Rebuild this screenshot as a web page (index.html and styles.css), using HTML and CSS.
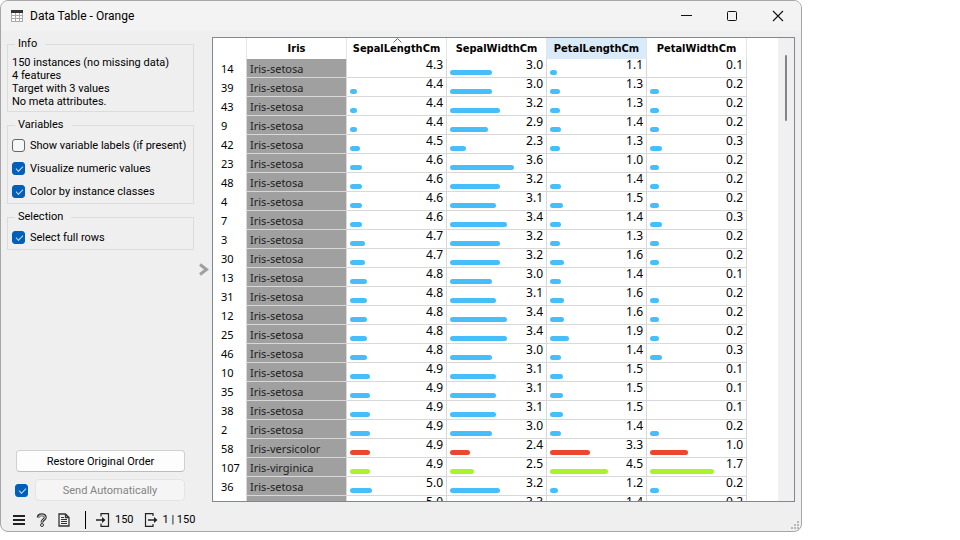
FILE: index.html
```html
<!DOCTYPE html>
<html lang="en">
<head>
<meta charset="utf-8">
<title>Data Table - Orange</title>
<link rel="stylesheet" href="styles.css">
</head>
<body>
<main class="window">
  <header class="titlebar">
    <svg class="app-icon" width="12" height="12" viewBox="0 0 12 12" shape-rendering="crispEdges"><rect width="12" height="12" fill="#fff"/><path d="M0 0h12v3H0z" fill="#333"/><path d="M.5 3v8.500h11V3M4.500 3v9M8.500 3v9M0 5.500h12M0 8.500h12" fill="none" stroke="#aaa"/></svg>
    <h1 class="title">Data Table - Orange</h1>
    <button class="win-btn" type="button" aria-label="Minimize"><svg width="12" height="12" viewBox="0 0 12 12"><path d="M1 5.500h11" stroke="#111"/></svg></button>
    <button class="win-btn" type="button" aria-label="Maximize"><svg width="12" height="12" viewBox="0 0 12 12"><rect x="1.500" y="1.500" width="9" height="9" rx="1" fill="none" stroke="#111"/></svg></button>
    <button class="win-btn" type="button" aria-label="Close"><svg width="12" height="12" viewBox="0 0 12 12"><path d="M1 1l10 10M11 1L1 11" stroke="#111" stroke-width="1.100"/></svg></button>
  </header>
  <div class="body">
    <aside class="side">
      <fieldset class="group">
        <legend>Info</legend>
        <p class="info">150 instances (no missing data)<br>4 features<br>Target with 3 values<br>No meta attributes.</p>
      </fieldset>
      <fieldset class="group">
        <legend>Variables</legend>
        <label class="option"><input class="check" type="checkbox">Show variable labels (if present)</label>
        <label class="option"><input class="check" type="checkbox" checked>Visualize numeric values</label>
        <label class="option"><input class="check" type="checkbox" checked>Color by instance classes</label>
      </fieldset>
      <fieldset class="group">
        <legend>Selection</legend>
        <label class="option"><input class="check" type="checkbox" checked>Select full rows</label>
      </fieldset>
      <div class="actions">
        <button class="push" type="button">Restore Original Order</button>
        <div class="send">
          <input class="check" type="checkbox" checked aria-label="Send automatically">
          <button class="push" type="button" disabled>Send Automatically</button>
        </div>
      </div>
    </aside>
    <button class="collapse" type="button" aria-label="Toggle side panel"><svg width="12" height="14" viewBox="0 0 12 14"><path d="M3 1.500l6.500 5L3 11.500" fill="none" stroke="#a0a0a0" stroke-width="3"/></svg></button>
    <section class="view">
      <div class="grid-clip">
        <table class="grid">
          <colgroup><col class="c-id"><col class="c-cell"><col class="c-cell"><col class="c-cell"><col class="c-cell"><col class="c-cell"></colgroup>
          <thead>
            <tr><td></td><th>Iris</th><th class="sorted">SepalLengthCm<svg class="sort" width="9" height="5" viewBox="0 0 9 5"><path d="M.5 4.500l4-4 4 4" fill="none" stroke="#666"/></svg></th><th>SepalWidthCm</th><th class="hover">PetalLengthCm</th><th>PetalWidthCm</th></tr>
          </thead>
          <tbody id="rows"></tbody>
        </table>
      </div>
      <div class="scroll"><div class="thumb"></div></div>
    </section>
  </div>
  <footer class="status">
    <button class="tool" type="button" aria-label="Menu"><svg width="14" height="14" viewBox="0 0 14 14"><path d="M1 3h12M1 7h12M1 11h12" stroke="#222" stroke-width="2" shape-rendering="crispEdges"/></svg></button>
    <button class="tool" type="button" aria-label="Help"><svg width="12" height="14" viewBox="0 0 12 14"><path d="M2.200 4.500C2.500 .8 9.300 .8 9.300 4.300C9.300 6.600 6 6.500 6 9.400" fill="none" stroke="#333" stroke-width="3"/><path d="M2.700 4C3 1.500 9 1.200 9.200 4.300C9.200 6.600 6 6.500 6 8.700" fill="none" stroke="#efefef"/><circle cx="6" cy="12" r="1.500" fill="#efefef" stroke="#333"/></svg></button>
    <button class="tool" type="button" aria-label="Report"><svg width="12" height="14" viewBox="0 0 12 14"><path d="M1 1h6.500L11 4.500V13H1zM7.500 1v3.500H11" fill="none" stroke="#333" stroke-width="1.300"/><path d="M3 4.500h3M3 6.500h6M3 8.500h6M3 10.500h6" stroke="#333"/></svg></button>
    <span class="rule"></span>
    <span class="flow"><svg width="14" height="14" viewBox="0 0 14 14"><path d="M5 3.500V.6h7.500v12.800H5V10.500" fill="none" stroke="#222" stroke-width="1.200"/><path d="M0 7h8" stroke="#222" stroke-width="1.300"/><path d="M6 4l3.500 3L6 10z" fill="#222"/></svg>150</span>
    <span class="flow"><svg width="14" height="14" viewBox="0 0 14 14"><path d="M9 3V.6H1.500v12.800H9V11" fill="none" stroke="#222" stroke-width="1.200"/><path d="M4 7h8" stroke="#222" stroke-width="1.300"/><path d="M10 4l3.500 3L10 10z" fill="#222"/></svg>1 | 150</span>
    <svg class="grip" width="8" height="8" viewBox="0 0 8 8" fill="#b8b8b8" shape-rendering="crispEdges"><path d="M6 0h2v2H6zM3 3h2v2H3zM6 3h2v2H6zM0 6h2v2H0zM3 6h2v2H3zM6 6h2v2H6z"/></svg>
  </footer>
</main>
<script src="table.js"></script>
</body>
</html>
```
FILE: styles.css
```css
* { box-sizing: border-box; }

body {
  margin: 0;
  padding: 0 158px 8px 0;
  height: 100vh;
  background: #fff;
  color: #000;
  font: 11px/13px Roboto, sans-serif;
  overflow: hidden;
}

button { font: inherit; color: inherit; border: 0; padding: 0; background: none; }
svg { display: block; flex: none; }

.window {
  height: 100%;
  display: flex;
  flex-direction: column;
  background: #efefef;
  border: 1px solid #a6a6a6;
  border-radius: 8px;
  overflow: hidden;
}

.titlebar {
  display: flex;
  align-items: center;
  height: 30px;
  flex: none;
  padding-left: 10px;
  background: #f3f3f3;
}
.title { flex: 1; margin: 0 0 0 7px; font: 12px/16px Roboto, sans-serif; }
.win-btn { width: 46px; height: 28px; display: grid; place-items: center; }

.body { flex: 1; min-height: 0; display: flex; padding: 6px 6px 0; }

.side { width: 187px; flex: none; display: flex; flex-direction: column; gap: 6px; }
.group { margin: 0; padding: 2px 4px 0; border: 1px solid #dcdcdc; min-width: 0; }
.group legend { margin-left: 3px; padding: 0 8px 0 3px; height: 14px; line-height: 14px; }
.info { margin: 3px 0; white-space: nowrap; }
.option { display: flex; align-items: center; gap: 5px; height: 23px; white-space: nowrap; }

.check {
  appearance: none;
  flex: none;
  width: 13px;
  height: 13px;
  margin: 0;
  border: 1px solid #666;
  border-radius: 3px;
  background: #f6f6f6;
  position: relative;
}
.check:checked { background: #005fb8; border-color: #005fb8; }
.check:checked::after {
  content: "";
  position: absolute;
  left: 3px;
  top: 3px;
  width: 6px;
  height: 3px;
  border: solid #c4dcf2;
  border-width: 0 0 1px 1px;
  transform: rotate(-45deg);
}

.actions { margin-top: auto; padding: 0 9px 1px; display: flex; flex-direction: column; gap: 7px; }
.push {
  height: 22px;
  border: 1px solid #d0d0d0;
  border-bottom-color: #bcbcbc;
  border-radius: 4px;
  background: #fdfdfd;
}
.push:disabled { flex: 1; border-color: #e4e4e4; background: #f5f5f5; color: #838383; }
.send { display: flex; align-items: center; gap: 7px; margin-left: -1px; }

.collapse { width: 18px; display: flex; align-items: center; justify-content: center; }

.view { flex: 1; min-width: 0; display: flex; border: 1px solid #828790; background: #fff; }
.grid-clip { flex: 1; min-width: 0; overflow: hidden; }
.grid { table-layout: fixed; width: 534px; border-collapse: separate; border-spacing: 0; font-family: "Noto Sans", sans-serif; }
.c-id { width: 34px; }
.c-cell { width: 100px; }
.grid th, .grid td { padding: 0; border-right: 1px solid #d8d8d8; white-space: nowrap; }
.grid thead th, .grid thead td { height: 21px; border-right-color: #e5e5e5; }
.grid th { font: bold 11px/21px "DejaVu Sans Condensed", sans-serif; text-align: center; }
.grid .hover { background: #d9ebf9; }
.sorted { position: relative; }
.sort { position: absolute; left: 46px; top: 0; }
.grid tbody td { height: 19px; border-bottom: 1px solid #d8d8d8; }
.grid tbody .id { padding: 0 0 0 8px; border-bottom: 0; }
.grid tbody .class { padding: 1px 0 0 3px; background: #a0a0a0; color: #222; line-height: 17px; }
.grid tbody .num { vertical-align: top; padding: 0 3px; }
.value { display: block; height: 11px; line-height: 12px; font-size: 12px; text-align: right; }
.bar { height: 5px; border-radius: 3px; background: #46befa; }
.versicolor .bar { background: #ed462f; }
.virginica .bar { background: #aaf22b; }

.scroll { width: 16px; flex: none; padding: 17px 7px 0; background: #f0f0f0; }
.thumb { width: 2px; height: 66px; border-radius: 1px; background: #858585; }

.status { height: 29px; flex: none; display: flex; align-items: center; padding: 6px 2px 0 11px; }
.tool { margin-right: 10px; }
.rule { width: 1px; height: 18px; margin: 0 10px 0 5px; background: #000; }
.flow { display: flex; align-items: center; gap: 5px; margin-right: 10px; }
.grip { margin-left: auto; align-self: flex-end; margin-bottom: 2px; }
```
FILE: table.js
```js
const ranges = [[4.3, 7.9], [2, 4.4], [1, 6.9], [0.1, 2.5]];
const data = `14 setosa 4.3 3.0 1.1 0.1
39 setosa 4.4 3.0 1.3 0.2
43 setosa 4.4 3.2 1.3 0.2
9 setosa 4.4 2.9 1.4 0.2
42 setosa 4.5 2.3 1.3 0.3
23 setosa 4.6 3.6 1.0 0.2
48 setosa 4.6 3.2 1.4 0.2
4 setosa 4.6 3.1 1.5 0.2
7 setosa 4.6 3.4 1.4 0.3
3 setosa 4.7 3.2 1.3 0.2
30 setosa 4.7 3.2 1.6 0.2
13 setosa 4.8 3.0 1.4 0.1
31 setosa 4.8 3.1 1.6 0.2
12 setosa 4.8 3.4 1.6 0.2
25 setosa 4.8 3.4 1.9 0.2
46 setosa 4.8 3.0 1.4 0.3
10 setosa 4.9 3.1 1.5 0.1
35 setosa 4.9 3.1 1.5 0.1
38 setosa 4.9 3.1 1.5 0.1
2 setosa 4.9 3.0 1.4 0.2
58 versicolor 4.9 2.4 3.3 1.0
107 virginica 4.9 2.5 4.5 1.7
36 setosa 5.0 3.2 1.2 0.2
50 setosa 5.0 3.3 1.4 0.2`;

document.getElementById("rows").innerHTML = data.split("\n").map(line => {
  const [id, kind, ...values] = line.split(" ");
  const cells = values.map((v, i) => {
    const [min, max] = ranges[i];
    const part = (v - min) / (max - min);
    const bar = part > 0 ? `<div class="bar" style="width:${Math.round(5 + 89 * part)}px"></div>` : "";
    return `<td class="num"><span class="value">${v}</span>${bar}</td>`;
  }).join("");
  return `<tr class="${kind}"><td class="id">${id}</td><td class="class">Iris-${kind}</td>${cells}</tr>`;
}).join("");
```
